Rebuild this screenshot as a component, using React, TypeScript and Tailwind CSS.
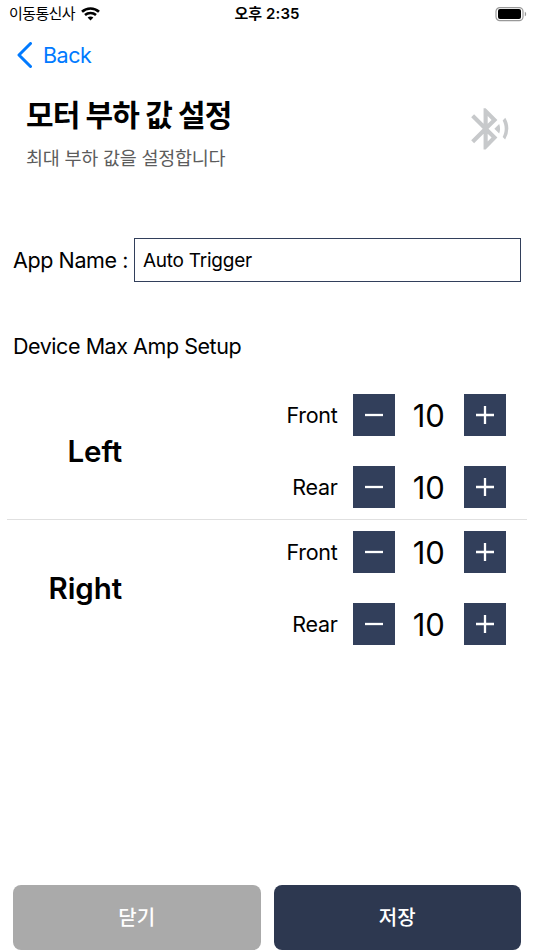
import { useState } from "react";
import { MdBluetoothSearching } from "react-icons/md";

function StatusBar() {
    return (
        <div className="flex h-7 items-center justify-between pl-[9px] pr-[7px]">
            <div className="flex w-[119px] items-center gap-[6px]">
                <span className="whitespace-nowrap text-[15px] leading-5 tracking-[-0.6px]">이동통신사</span>
                <svg width="19" height="14" viewBox="0 0 19 14" fill="none" stroke="black">
                    <path d="M1 4.7C5.8.4 13.2.4 18 4.7" strokeWidth="2.7" />
                    <path d="M4 8c3.1-2.8 7.9-2.8 11 0" strokeWidth="2.5" />
                    <path d="M6.6 10.5c1.6-1.5 4.2-1.5 5.8 0L9.5 13.5z" fill="black" stroke="none" />
                </svg>
            </div>
            <span className="whitespace-nowrap text-[15px] font-semibold leading-5 tracking-[0.1px]">오후 2:35</span>
            <div className="flex w-[121px] justify-end">
                <svg width="32" height="15" viewBox="0 0 32 15">
                    <rect x="1" y=".6" width="27" height="13" rx="3.8" fill="none" stroke="#999" strokeWidth="1.2" />
                    <rect x="3" y="2" width="23" height="10" rx="2" fill="black" />
                    <path d="M29.8 4.7c1.8.7 1.8 3.9 0 4.6z" fill="#999" />
                </svg>
            </div>
        </div>
    );
}

function Stepper({ label }: { label: string }) {
    const [amp, setAmp] = useState(10);

    return (
        <div className="flex items-center">
            <span className="mr-[15.5px] text-[21.5px] leading-7 tracking-[-0.3px]">{label}</span>
            <button
                className="flex h-[42px] w-[41.5px] items-center justify-center bg-[#323f5b] text-white"
                onClick={() => setAmp(amp - 1)}
            >
                <svg width="20" height="20" viewBox="0 0 20 20" stroke="currentColor" strokeWidth="2.3">
                    <path d="M1 10h18" />
                </svg>
            </button>
            <span className="w-[69.5px] pr-px pt-px text-center text-[31px] leading-10 tracking-[-0.1px]">{amp}</span>
            <button
                className="flex h-[42px] w-[41.5px] items-center justify-center bg-[#323f5b] text-white"
                onClick={() => setAmp(amp + 1)}
            >
                <svg width="20" height="20" viewBox="0 0 20 20" stroke="currentColor" strokeWidth="2.3">
                    <path d="M1 10h18M10 1v18" />
                </svg>
            </button>
        </div>
    );
}

function DeviceSide({ title }: { title: string }) {
    return (
        <div className="flex items-center justify-between pr-[21.5px]">
            <p className="w-[115px] text-right text-[29.5px] font-semibold leading-9 tracking-[-0.1px]">{title}</p>
            <div className="flex flex-col items-end gap-[30px]">
                <Stepper label="Front" />
                <Stepper label="Rear" />
            </div>
        </div>
    );
}

export default function App() {
    const [name, setName] = useState("Auto Trigger");

    return (
        <div className="flex h-[950px] w-[534px] flex-col overflow-hidden bg-white font-['Inter','Noto_Sans_CJK_KR',sans-serif] text-black">
            <StatusBar />
            <button className="flex h-[54px] w-fit items-center gap-[11px] pl-[17px] text-[#007aff]">
                <svg width="15" height="26" viewBox="0 0 15 26" fill="none" stroke="currentColor" strokeWidth="3">
                    <path d="M13.5 1.5L2 13l11.5 11.5" strokeLinecap="round" strokeLinejoin="round" />
                </svg>
                <span className="text-[21.5px] leading-7 tracking-[-0.5px]">Back</span>
            </button>

            <div className="flex h-[94px] justify-between pl-[26px] pr-5">
                <div className="pt-[13px]">
                    <h1 className="text-[30px] font-bold leading-10 tracking-[-0.9px]">모터 부하 값 설정</h1>
                    <p className="mt-[9px] text-[18.5px] leading-7 tracking-[-0.25px] text-[#5c5c5c]">최대 부하 값을 설정합니다</p>
                </div>
                <MdBluetoothSearching size={49.5} className="mt-[22px] text-[#c7c9cb]" />
            </div>

            <div className="mt-[61.5px] flex items-center gap-[6px] pl-[13px] pr-[13px]">
                <label htmlFor="app-name" className="w-[115px] whitespace-nowrap pt-px text-[21.5px] leading-7 tracking-[-0.4px]">
                    App Name :
                </label>
                <input
                    id="app-name"
                    className="h-[44px] min-w-0 flex-1 border-[1.5px] border-[#323f5b] px-2 pt-0.5 text-[19px] tracking-[-0.25px] outline-none"
                    value={name}
                    onChange={(e) => setName(e.target.value)}
                />
            </div>
            <p className="mt-[50.5px] pl-[13px] text-[21.5px] leading-7 tracking-[-0.45px]">Device Max Amp Setup</p>

            <div className="mx-[7px] mt-[34px]">
                <DeviceSide title="Left" />
                <div className="mb-[11px] mt-[11px] h-px bg-[#e0e0e0]" />
                <DeviceSide title="Right" />
            </div>

            <div className="mt-auto flex gap-[13px] px-[13px] text-[20px] font-medium text-white">
                <button className="h-[65px] flex-1 rounded-lg bg-[#aaa] pt-px">닫기</button>
                <button className="h-[65px] flex-1 rounded-lg bg-[#2d3850] pt-px">저장</button>
            </div>
        </div>
    );
}
